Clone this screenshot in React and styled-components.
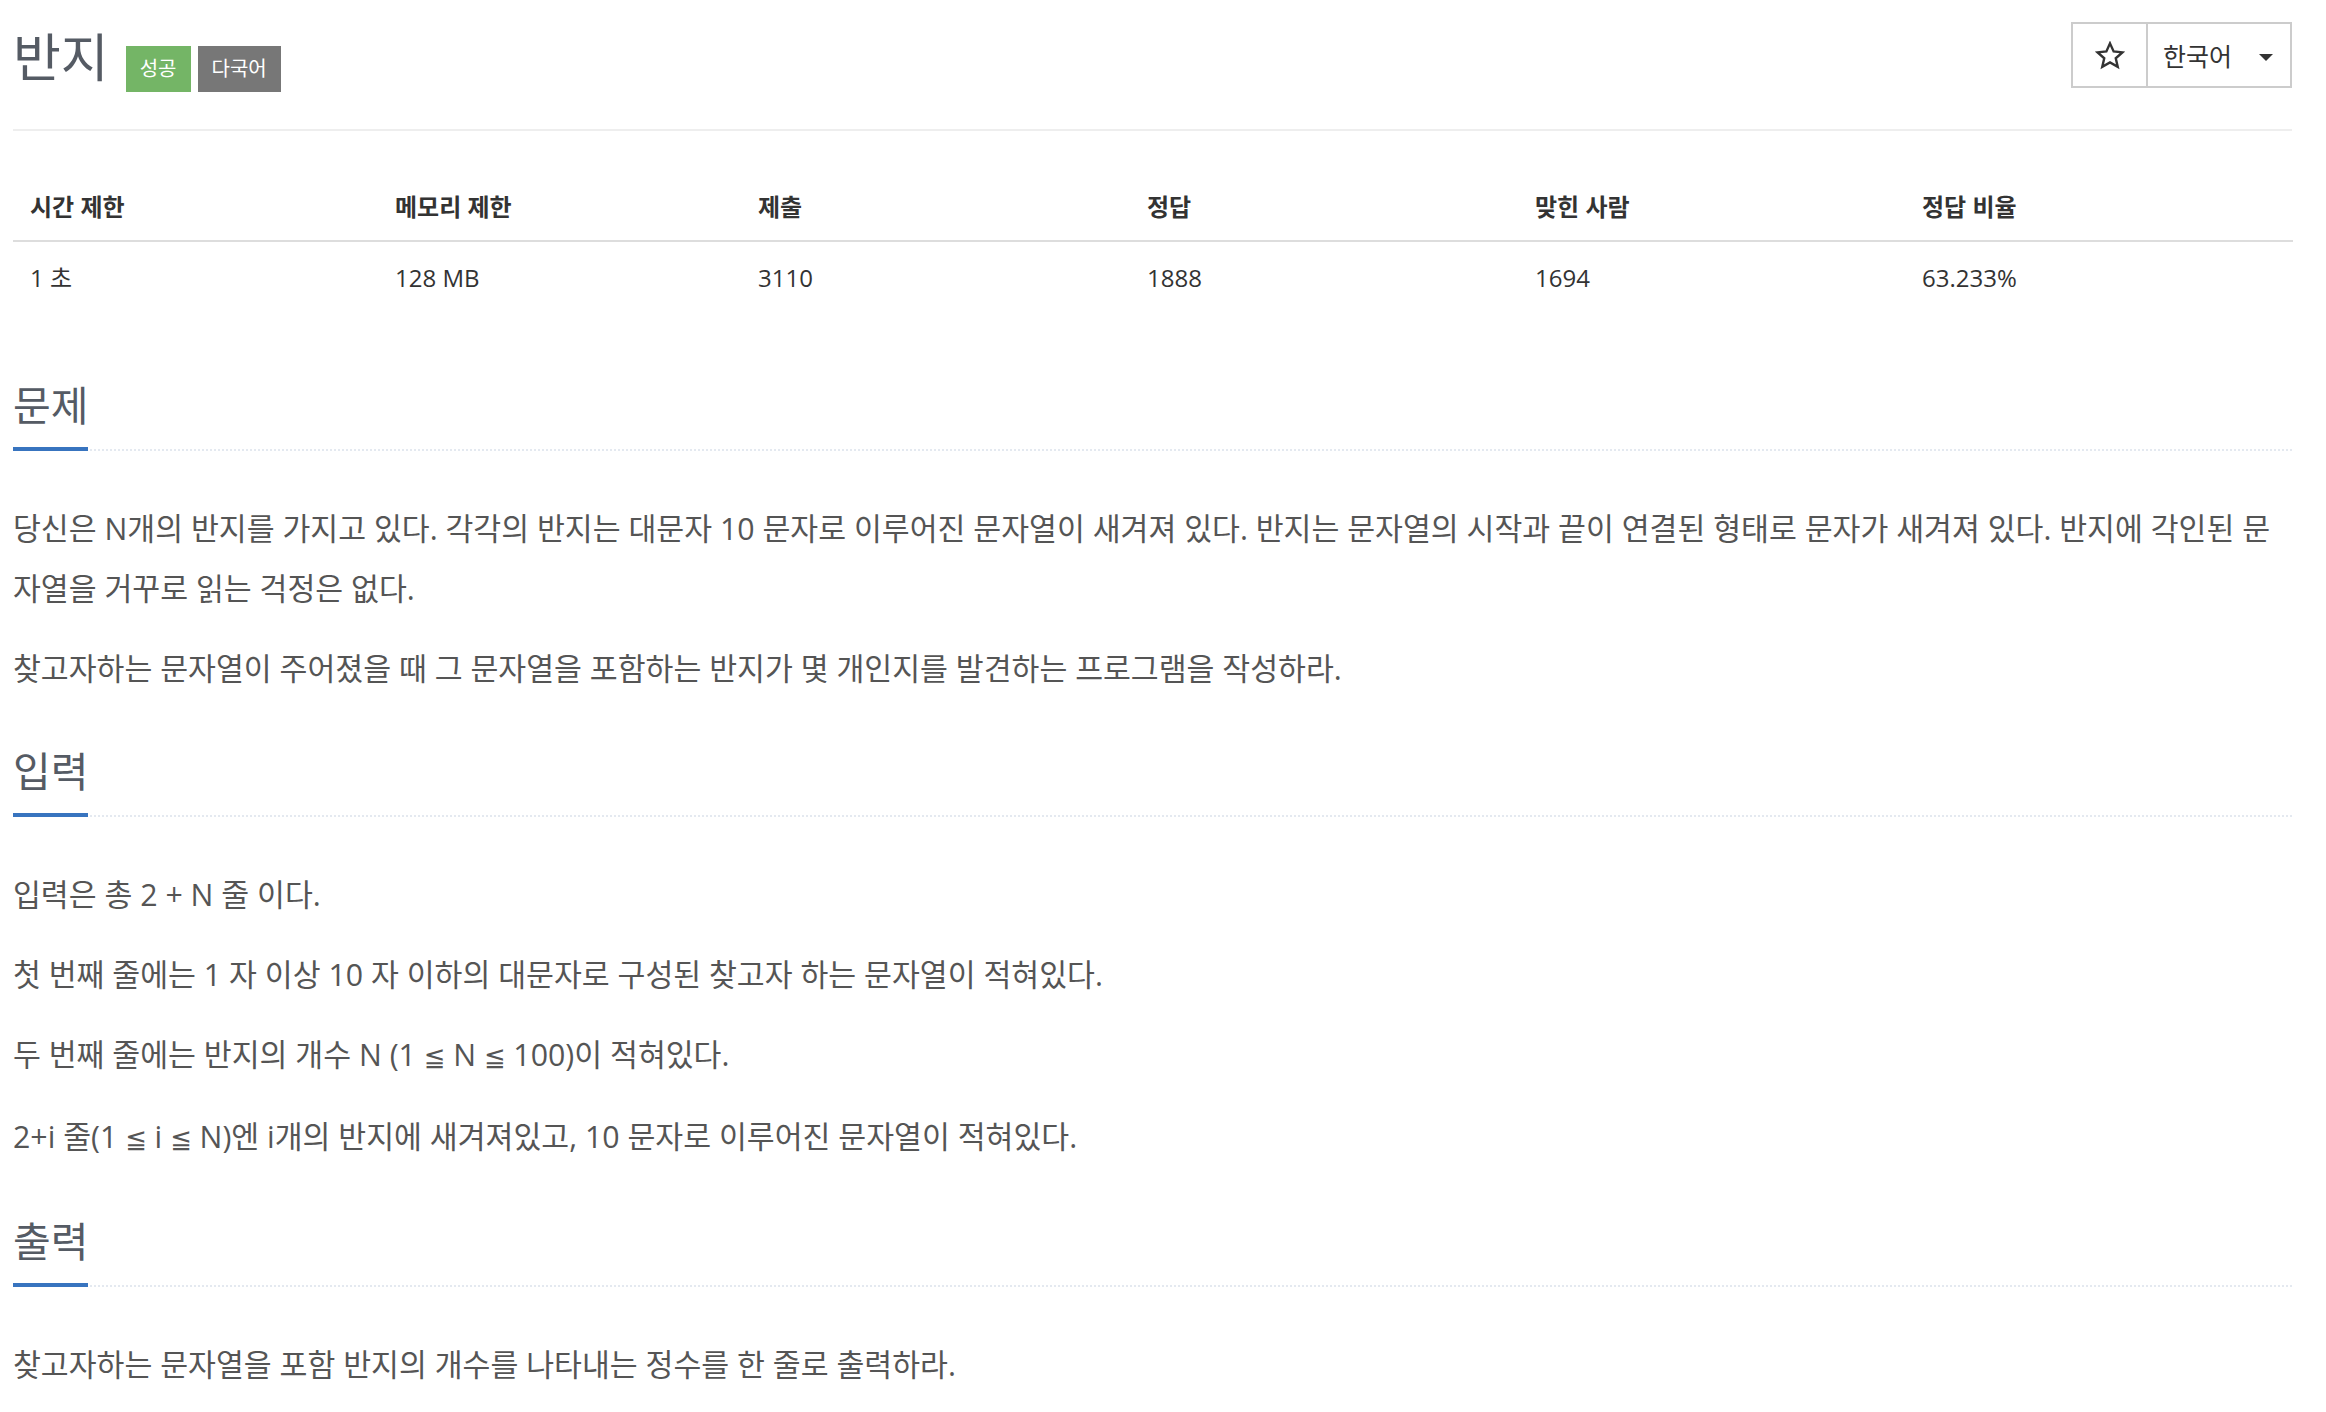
import styled, { createGlobalStyle } from "styled-components";

const GlobalStyle = createGlobalStyle`
  body {
    margin: 0;
    background: #fff;
    font-family: "Open Sans", "Noto Sans CJK KR", sans-serif;
    color: #555;
  }
`;

const stats = [
  { label: "시간 제한", value: "1 초", width: 365 },
  { label: "메모리 제한", value: "128 MB", width: 363 },
  { label: "제출", value: "3110", width: 389 },
  { label: "정답", value: "1888", width: 388 },
  { label: "맞힌 사람", value: "1694", width: 387 },
  { label: "정답 비율", value: "63.233%", width: 388 },
];

const sections = [
  {
    title: "문제",
    paras: [
      "당신은 N개의 반지를 가지고 있다. 각각의 반지는 대문자 10 문자로 이루어진 문자열이 새겨져 있다. 반지는 문자열의 시작과 끝이 연결된 형태로 문자가 새겨져 있다. 반지에 각인된 문자열을 거꾸로 읽는 걱정은 없다.",
      "찾고자하는 문자열이 주어졌을 때 그 문자열을 포함하는 반지가 몇 개인지를 발견하는 프로그램을 작성하라.",
    ],
  },
  {
    title: "입력",
    paras: [
      "입력은 총 2 + N 줄 이다.",
      "첫 번째 줄에는 1 자 이상 10 자 이하의 대문자로 구성된 찾고자 하는 문자열이 적혀있다.",
      "두 번째 줄에는 반지의 개수 N (1 ≦ N ≦ 100)이 적혀있다.",
      "2+i 줄(1 ≦ i ≦ N)엔 i개의 반지에 새겨져있고, 10 문자로 이루어진 문자열이 적혀있다.",
    ],
  },
  {
    title: "출력",
    paras: ["찾고자하는 문자열을 포함 반지의 개수를 나타내는 정수를 한 줄로 출력하라."],
  },
];

// ≦ falls back to a full-width CJK glyph, so give it a narrower font
function renderText(text) {
  const parts = text.split("≦");
  return parts.map((part, i) => (
    <span key={i}>
      {part}
      {i < parts.length - 1 && <Sym>≦</Sym>}
    </span>
  ));
}

function StarIcon() {
  return (
    <svg width="30" height="29" viewBox="0 0 24 23">
      <path
        d="M12 1.8l2.9 6.5 7 .7-5.3 4.7 1.6 6.9L12 17l-6.2 3.6 1.6-6.9L2.1 9l7-.7z"
        fill="none"
        stroke="#333"
        strokeWidth="1.9"
        strokeLinejoin="miter"
      />
    </svg>
  );
}

export default function App() {
  return (
    <>
      <GlobalStyle />
      <Page>
        <Header>
          <TitleRow>
            <Title>반지</Title>
            <Badge $bg="#74b566">성공</Badge>
            <Badge $bg="#777">다국어</Badge>
          </TitleRow>
          <ButtonGroup>
            <StarButton>
              <StarIcon />
            </StarButton>
            <LangButton>
              한국어
              <Caret />
            </LangButton>
          </ButtonGroup>
        </Header>

        <InfoTable>
          <colgroup>
            {stats.map((s) => (
              <col key={s.label} style={{ width: `${s.width}px` }} />
            ))}
          </colgroup>
          <thead>
            <tr>
              {stats.map((s) => (
                <Th key={s.label}>{s.label}</Th>
              ))}
            </tr>
          </thead>
          <tbody>
            <tr>
              {stats.map((s) => (
                <Td key={s.label}>{s.value}</Td>
              ))}
            </tr>
          </tbody>
        </InfoTable>

        {sections.map((sec) => (
          <Section key={sec.title}>
            <Headline>
              <HeadTitle>{sec.title}</HeadTitle>
            </Headline>
            {sec.paras.map((p, i) => (
              <Para key={i}>{renderText(p)}</Para>
            ))}
          </Section>
        ))}
      </Page>
    </>
  );
}

const Page = styled.div`
  padding: 0 34px 0 13px;
`;

const Header = styled.div`
  display: flex;
  justify-content: space-between;
  align-items: flex-start;
  height: 131px;
  box-sizing: border-box;
  padding-top: 22px;
  border-bottom: 2px solid #eee;
`;

const TitleRow = styled.div`
  display: flex;
  align-items: flex-start;
  margin-top: 5px;
`;

const Title = styled.h1`
  margin: 0 17px 0 0;
  height: 60px;
  font-size: 52px;
  line-height: 60px;
  font-weight: 400;
  color: #555b64;
`;

const Badge = styled.span`
  display: inline-block;
  margin: 19px 7px 0 0;
  height: 46px;
  padding: 0 14px;
  box-sizing: border-box;
  background: ${(p) => p.$bg};
  color: #fff;
  font-size: 20px;
  line-height: 46px;
`;

const ButtonGroup = styled.div`
  display: flex;
`;

const StarButton = styled.button`
  width: 77px;
  height: 66px;
  box-sizing: border-box;
  border: 2px solid #ccc;
  background: #fff;
  display: flex;
  align-items: center;
  justify-content: center;
  padding: 0;
`;

const LangButton = styled.button`
  width: 144px;
  height: 66px;
  box-sizing: border-box;
  border: 2px solid #ccc;
  border-left: none;
  background: #fff;
  color: #333;
  font-family: "Open Sans", "Noto Sans CJK KR", sans-serif;
  font-size: 25px;
  display: flex;
  align-items: center;
  justify-content: space-between;
  padding: 0 17px 0 15px;
`;

const Caret = styled.span`
  width: 0;
  height: 0;
  border-left: 7px solid transparent;
  border-right: 7px solid transparent;
  border-top: 7px solid #333;
  margin-top: 4px;
`;

const InfoTable = styled.table`
  width: 100%;
  border-collapse: collapse;
  table-layout: fixed;
  margin: 43px 0 70px;
`;

const Th = styled.th`
  text-align: left;
  font-weight: 700;
  font-size: 24px;
  line-height: 34px;
  padding: 16px 17px;
  color: #333;
  border-bottom: 2px solid #ddd;
`;

const Td = styled.td`
  font-size: 24px;
  line-height: 34px;
  padding: 19px 17px 18px;
  color: #333;
`;

const Section = styled.section`
  margin-top: 50px;
`;

const Headline = styled.div`
  display: flex;
  align-items: flex-end;
  border-bottom: 2px dotted #e4e9f0;
  margin-bottom: 48px;
`;

const HeadTitle = styled.h2`
  margin: 0 0 -2px;
  height: 44px;
  padding-bottom: 20px;
  border-bottom: 4px solid #3874bf;
  font-size: 41px;
  line-height: 44px;
  font-weight: 400;
  color: #555b64;
`;

const Para = styled.p`
  margin: 0 0 20px;
  font-size: 30.3px;
  line-height: 60px;
  color: #555;
`;

const Sym = styled.span`
  font-family: "DejaVu Sans", sans-serif;
  font-size: 0.85em;
`;
